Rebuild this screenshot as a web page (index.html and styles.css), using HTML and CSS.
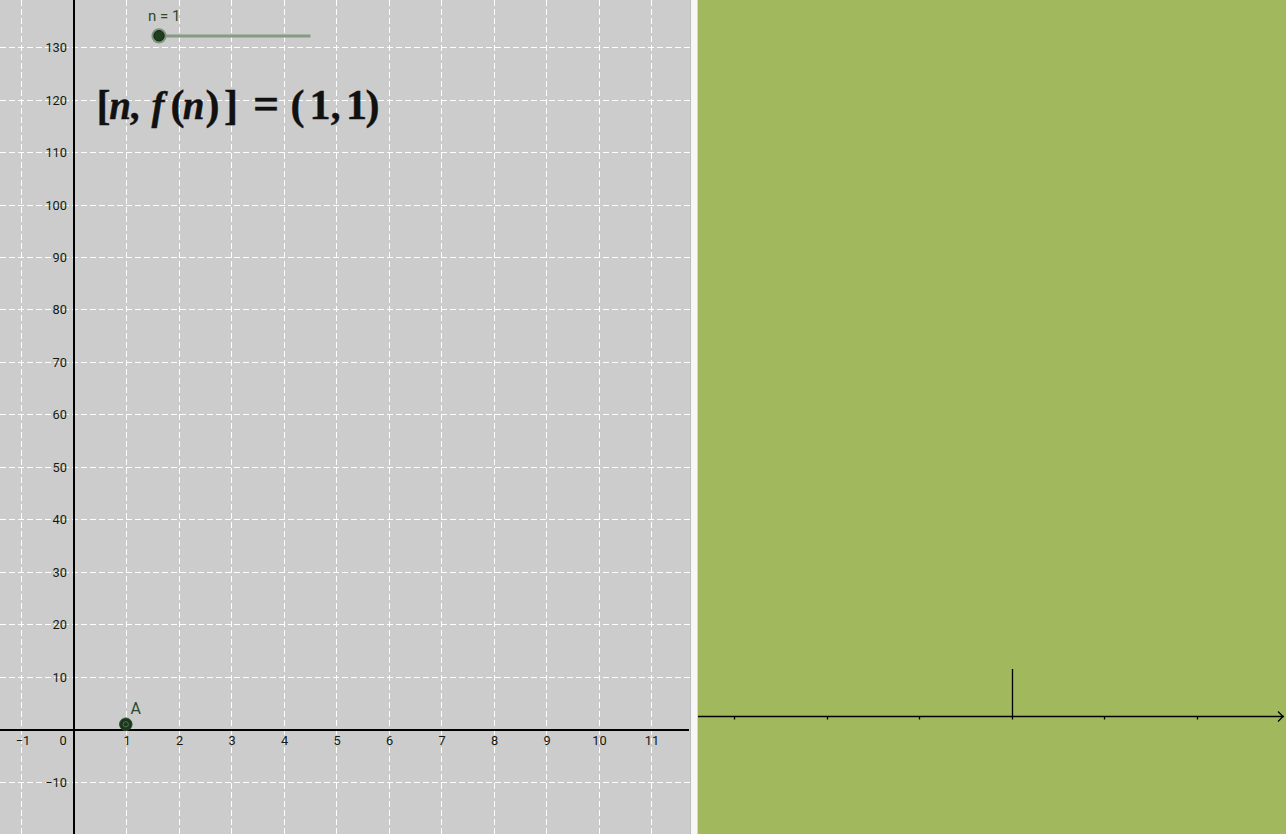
FILE: index.html
```html
<!DOCTYPE html>
<html>
<head>
<meta charset="utf-8">
<link rel="stylesheet" href="styles.css">
</head>
<body>
<div class="app">
  <div class="graphics">
    <svg class="canvas" width="690" height="834" viewBox="0 0 690 834">
      <g class="grid">
        <line x1="21.5" y1="0" x2="21.5" y2="834"/>
        <line x1="126.5" y1="0" x2="126.5" y2="834"/>
        <line x1="179.5" y1="0" x2="179.5" y2="834"/>
        <line x1="231.5" y1="0" x2="231.5" y2="834"/>
        <line x1="284.5" y1="0" x2="284.5" y2="834"/>
        <line x1="336.5" y1="0" x2="336.5" y2="834"/>
        <line x1="389.5" y1="0" x2="389.5" y2="834"/>
        <line x1="441.5" y1="0" x2="441.5" y2="834"/>
        <line x1="494.5" y1="0" x2="494.5" y2="834"/>
        <line x1="546.5" y1="0" x2="546.5" y2="834"/>
        <line x1="599.5" y1="0" x2="599.5" y2="834"/>
        <line x1="651.5" y1="0" x2="651.5" y2="834"/>
        <line x1="0" y1="47.5" x2="690" y2="47.5"/>
        <line x1="0" y1="100.5" x2="690" y2="100.5"/>
        <line x1="0" y1="152.5" x2="690" y2="152.5"/>
        <line x1="0" y1="205.5" x2="690" y2="205.5"/>
        <line x1="0" y1="257.5" x2="690" y2="257.5"/>
        <line x1="0" y1="309.5" x2="690" y2="309.5"/>
        <line x1="0" y1="362.5" x2="690" y2="362.5"/>
        <line x1="0" y1="414.5" x2="690" y2="414.5"/>
        <line x1="0" y1="467.5" x2="690" y2="467.5"/>
        <line x1="0" y1="519.5" x2="690" y2="519.5"/>
        <line x1="0" y1="572.5" x2="690" y2="572.5"/>
        <line x1="0" y1="624.5" x2="690" y2="624.5"/>
        <line x1="0" y1="677.5" x2="690" y2="677.5"/>
        <line x1="0" y1="782.5" x2="690" y2="782.5"/>
      </g>
      <g class="axes">
        <line x1="74" y1="0" x2="74" y2="834"/>
        <line x1="0" y1="730" x2="689" y2="730"/>
      </g>
      <g class="ylabels">
        <text x="67" y="51.5">130</text>
        <text x="67" y="104.5">120</text>
        <text x="67" y="156.5">110</text>
        <text x="67" y="209.5">100</text>
        <text x="67" y="261.5">90</text>
        <text x="67" y="313.5">80</text>
        <text x="67" y="366.5">70</text>
        <text x="67" y="418.5">60</text>
        <text x="67" y="471.5">50</text>
        <text x="67" y="523.5">40</text>
        <text x="67" y="576.5">30</text>
        <text x="67" y="628.5">20</text>
        <text x="67" y="681.5">10</text>
        <text x="67" y="786.5">−10</text>
      </g>
      <g class="xlabels">
        <text x="23" y="744.5">−1</text>
        <text x="63" y="744.5">0</text>
        <text x="127" y="744.5">1</text>
        <text x="179.5" y="744.5">2</text>
        <text x="232" y="744.5">3</text>
        <text x="284.5" y="744.5">4</text>
        <text x="337" y="744.5">5</text>
        <text x="389.5" y="744.5">6</text>
        <text x="442" y="744.5">7</text>
        <text x="494.5" y="744.5">8</text>
        <text x="547" y="744.5">9</text>
        <text x="599.5" y="744.5">10</text>
        <text x="652" y="744.5">11</text>
      </g>
      <g class="slider">
        <text class="obj-label" x="148" y="20.7">n = 1</text>
        <line class="slider-track" x1="160" y1="36" x2="310.5" y2="36"/>
        <circle class="halo" cx="159" cy="35.8" r="7.6"/>
        <circle class="knob" cx="159" cy="35.8" r="5.2"/>
      </g>
      <g class="point">
        <circle class="pt" cx="125.8" cy="724.3" r="6.3"/>
        <circle class="pt-ring" cx="125.8" cy="724.3" r="2.6"/>
        <text class="obj-label big" x="130.5" y="713.5">A</text>
      </g>
      <text class="formula" y="119.3"><tspan class="delim" x="103.5">[</tspan><tspan class="var" x="120">n</tspan><tspan x="134.5">,</tspan><tspan class="var" x="158">f</tspan><tspan class="delim" x="177.5">(</tspan><tspan class="var" x="193.5">n</tspan><tspan class="delim" x="212.5">)</tspan><tspan class="delim" x="231">]</tspan><tspan class="eq" x="266">=</tspan><tspan class="delim" x="297.5">(</tspan><tspan class="num" x="320">1</tspan><tspan x="335.5">,</tspan><tspan class="num" x="356.5">1</tspan><tspan class="delim" x="372.5">)</tspan></text>
    </svg>
  </div>
  <div class="divider"></div>
  <div class="graphics2">
    <svg class="canvas2" width="588" height="834" viewBox="0 0 588 834">
      <g class="axes2">
        <line x1="0" y1="716.5" x2="586" y2="716.5"/>
        <line x1="314.5" y1="669" x2="314.5" y2="719.5"/>
        <line x1="36.5" y1="716.5" x2="36.5" y2="719.5"/>
        <line x1="129.5" y1="716.5" x2="129.5" y2="719.5"/>
        <line x1="221.5" y1="716.5" x2="221.5" y2="719.5"/>
        <line x1="406.5" y1="716.5" x2="406.5" y2="719.5"/>
        <line x1="499.5" y1="716.5" x2="499.5" y2="719.5"/>
        <polyline class="arrow" points="580,711.5 585,716.5 580,721.5"/>
      </g>
    </svg>
  </div>
  <div class="edge"></div>
</div>
</body>
</html>
```

FILE: styles.css
```css
html, body {
  margin: 0;
  padding: 0;
  background: #ffffff;
}

.app {
  display: flex;
  width: 1288px;
  height: 834px;
  overflow: hidden;
}

.graphics {
  width: 690px;
  height: 834px;
  background: #cccccc;
  flex: none;
}

.canvas, .canvas2 {
  display: block;
}

.grid line {
  stroke: #ffffff;
  stroke-width: 1;
  stroke-dasharray: 6 3;
  shape-rendering: crispEdges;
}

.axes line {
  stroke: #000000;
  stroke-width: 2;
  shape-rendering: crispEdges;
}

.ylabels text,
.xlabels text {
  font-family: Roboto, "Liberation Sans", sans-serif;
  font-size: 12.8px;
  fill: #141a12;
}

.ylabels text {
  text-anchor: end;
}

.xlabels text {
  text-anchor: middle;
}

.obj-label {
  font-family: Roboto, "Liberation Sans", sans-serif;
  font-size: 15px;
  fill: #2c4a2c;
}

.obj-label.big {
  font-size: 16px;
}

.slider-track {
  stroke: #889a86;
  stroke-width: 3;
}

.halo {
  fill: #7e927c;
}

.knob {
  fill: #1f3f1f;
  stroke: #112511;
  stroke-width: 1;
}

.pt {
  fill: #1c381c;
  stroke: #2f4a2f;
  stroke-width: 0.8;
}

.pt-ring {
  fill: none;
  stroke: #566f56;
  stroke-width: 1;
}

.formula {
  font-family: "Liberation Serif", "DejaVu Serif", serif;
  font-weight: bold;
  font-size: 39px;
  fill: #111111;
  stroke: #111111;
  stroke-width: 0.4;
  text-anchor: middle;
}

.formula .var {
  font-style: italic;
}

.formula .delim {
  font-size: 42px;
}

.formula .eq {
  font-size: 46px;
}

.formula .num {
  font-size: 42px;
}

.divider {
  flex: none;
  width: 6px;
  height: 834px;
  background: #f7f7f7;
  border-left: 1px solid #bdbdbd;
  border-right: 1px solid #d6d6d6;
}

.graphics2 {
  flex: none;
  width: 588px;
  height: 834px;
  background: #a1b85c;
}

.axes2 line,
.axes2 polyline {
  stroke: #000000;
  stroke-width: 1.3;
  fill: none;
}

.edge {
  flex: none;
  width: 2px;
  height: 834px;
  background: #ffffff;
}
```
